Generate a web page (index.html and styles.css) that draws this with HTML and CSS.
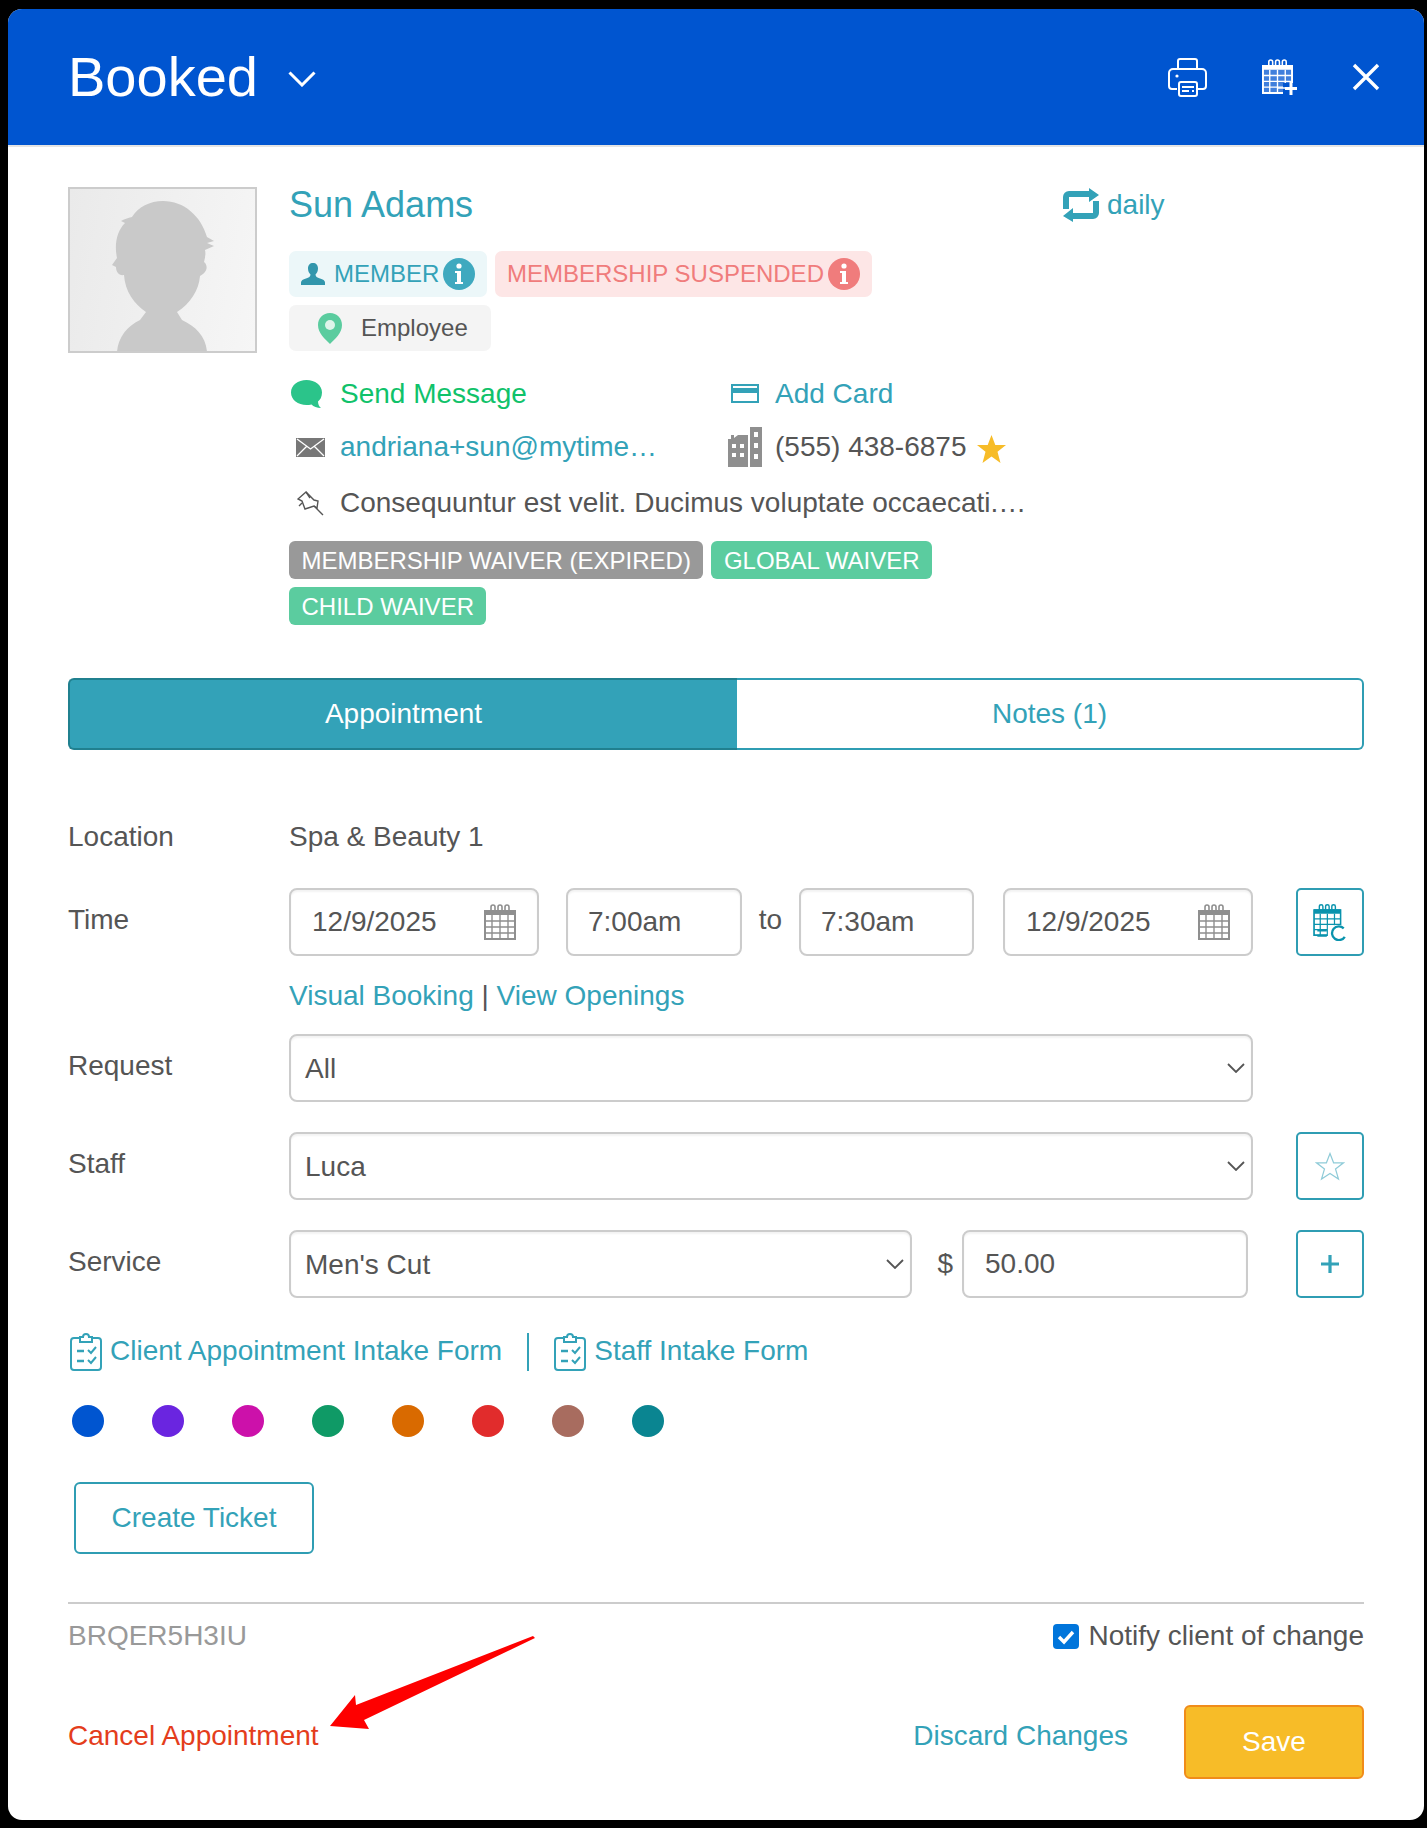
FILE: index.html
```html
<!DOCTYPE html>
<html lang="en">
<head>
  <meta charset="UTF-8">
  <title>Booked appointment</title>
  <link rel="stylesheet" href="styles.css">
</head>
<body>
  <svg class="defs" width="0" height="0">
    <symbol id="cal" viewBox="0 0 32 36">
      <path d="M1 7H31V35H1Z" fill="#fff" fill-opacity=".25" stroke="currentColor" stroke-width="2"/>
      <path d="M1 6H31V11H1Z" fill="currentColor"/>
      <path d="M7 8V3a2 2 0 0 1 4 0V8M14 8V3a2 2 0 0 1 4 0V8M21 8V3a2 2 0 0 1 4 0V8" fill="none" stroke="currentColor" stroke-width="1.6"/>
      <path d="M1 17H31M1 23H31M1 29H31M8 11V35M16 11V35M24 11V35" fill="none" stroke="currentColor" stroke-width="1.4"/>
    </symbol>
    <symbol id="clip" viewBox="0 0 32 39">
      <path d="M10 6H4a3 3 0 0 0-3 3V35a3 3 0 0 0 3 3H28a3 3 0 0 0 3-3V9a3 3 0 0 0-3-3H22M10 10H22V5H19a3 3 0 0 0-6 0H10Z" fill="none" stroke="currentColor" stroke-width="2"/>
      <path d="M7 19H14M7 29H14" stroke="currentColor" stroke-width="2.4"/>
      <path d="M18 18l3 3 5-6M18 28l3 3 5-6" fill="none" stroke="currentColor" stroke-width="2"/>
    </symbol>
    <symbol id="info" viewBox="0 0 32 32">
      <circle cx="16" cy="16" r="16" fill="currentColor"/>
      <circle cx="16" cy="8" r="2.6" fill="#fff"/>
      <path d="M12 13H18V24H20V26H12V24H14V15H12Z" fill="#fff"/>
    </symbol>
  </svg>

  <div class="modal">
    <header class="modal-head">
      <h1 class="status">Booked</h1>
      <svg class="status-caret" viewBox="0 0 28 16"><path d="M1.5 1.5L14 14L26.5 1.5" fill="none" stroke="#fff" stroke-width="3"/></svg>
      <div class="head-icons">
        <svg class="ic-print" viewBox="0 0 39 39" fill="none" stroke="#fff" stroke-width="2">
          <path d="M10 12V3a2 2 0 0 1 2-2H27a2 2 0 0 1 2 2V12"/>
          <path d="M9 31H4a3 3 0 0 1-3-3V15a4 4 0 0 1 4-4H34a4 4 0 0 1 4 4V28a3 3 0 0 1-3 3H30"/>
          <rect x="11" y="24" width="18" height="14" rx="2" fill="#0055d0"/>
          <path d="M14 29H26M14 33H21M24 33H26"/>
          <circle cx="9" cy="18" r="1.6" fill="#fff" stroke="none"/>
        </svg>
        <svg class="ic-calplus" viewBox="0 0 36 37">
          <use href="#cal" width="31" height="35" color="#fff"/>
          <path d="M21 24H36V37H21Z" fill="#0055d0"/>
          <path d="M29 23V36M23 29.500H35" stroke="#fff" stroke-width="3"/>
          <path d="M16 29H23" stroke="#fff" stroke-width="1.600"/>
        </svg>
        <svg class="ic-close" viewBox="0 0 28 28"><path d="M2 2L26 26M26 2L2 26" stroke="#fff" stroke-width="3.400"/></svg>
      </div>
    </header>

    <div class="modal-body">
      <section class="client">
        <div class="photo">
          <svg viewBox="70 189 185 162">
            <path fill="#c9c9c9" d="M117 352C118 338 127 326 140 320L146 312C134 304 125 291 124 275C119 276 116 272 116 267L112 265L117 258C114 244 117 231 125 223L121 221C124 219 128 218 132 217C138 207 150 201 163 201C184 201 201 216 207 237L214 241L207 243L214 246L205 250C206 254 205 258 204 262C208 265 208 272 200 276C199 290 190 304 177 312L182 320C195 326 206 336 207 352Z"/>
          </svg>
        </div>
        <div class="client-info">
          <div class="name-row">
            <a class="client-name">Sun Adams</a>
            <span class="repeat">
              <svg viewBox="0 0 36 34"><path d="M3 21V9a3 3 0 0 1 3-3H27M33 13V25a3 3 0 0 1-3 3H9" fill="none" stroke="currentColor" stroke-width="6"/><path d="M26 0L36 7L26 14ZM10 20L0 28L10 34Z" fill="currentColor"/></svg>
              daily
            </span>
          </div>
          <div class="badges">
            <span class="badge badge-member">
              <svg class="ic-person" viewBox="0 0 24 22"><path d="M12 0c3 0 5 2 5 5.500 0 2.500-1 4.500-2.500 6 0 2 1.500 3 4.500 4 3 .8 5 2 5 4V22H0v-2.500c0-2 2-3.200 5-4 3-1 4.500-2 4.500-4C8 10 7 8 7 5.500 7 2 9 0 12 0Z" fill="#3296ac"/></svg>
              MEMBER
              <svg class="ic-info"><use href="#info"/></svg>
            </span>
            <span class="badge badge-suspended">
              MEMBERSHIP SUSPENDED
              <svg class="ic-info"><use href="#info"/></svg>
            </span>
            <span class="badge badge-role">
              <svg class="ic-pin" viewBox="0 0 24 31"><path d="M12 0C5 0 0 5 0 12c0 8 7 14 12 19 5-5 12-11 12-19C24 5 19 0 12 0Z" fill="#5bcc9f"/><circle cx="12" cy="12" r="5" fill="#dff4ea"/></svg>
              Employee
            </span>
          </div>
          <div class="contact">
            <div class="contact-row">
              <div class="contact-cell">
                <span class="contact-ic"><svg class="ic-chat" viewBox="0 0 31 28"><path d="M15.500 0C24 0 31 5 31 12.500 31 17 29 20 27 21.500 27 24 28 26.500 30 28 26 28 22.500 26.500 20.500 24.500 18.800 24.900 17.200 25 15.500 25 7 25 0 20 0 12.500 0 5 7 0 15.500 0Z" fill="#2bc48a"/></svg></span>
                <a class="send-link">Send Message</a>
              </div>
              <div class="contact-cell">
                <span class="contact-ic"><svg class="ic-card" viewBox="0 0 28 19"><rect x="1" y="1" width="26" height="17" fill="none" stroke="#33a2b8" stroke-width="2"/><path d="M1 4H27V9H1Z" fill="#33a2b8"/></svg></span>
                <a class="link">Add Card</a>
              </div>
            </div>
            <div class="contact-row">
              <div class="contact-cell">
                <span class="contact-ic"><svg class="ic-mail" viewBox="0 0 29 19"><path d="M0 0H29V19H0Z" fill="#777"/><path d="M1 1L14.500 11L28 1M1 18L10.500 8.500M28 18L18.500 8.500" fill="none" stroke="#fff" stroke-width="1.300"/></svg></span>
                <a class="link">andriana+sun@mytime…</a>
              </div>
              <div class="contact-cell">
                <span class="contact-ic"><svg class="ic-building" viewBox="0 0 34 40"><path d="M0 12H3V8H6V11L10 8H20V40H0ZM22 0H34V40H22Z" fill="#8f8f8f"/><path d="M4 17h4v4H4ZM12 17h4v4H12ZM4 26h4v4H4ZM12 26h4v4H12ZM26 5h4v5H26ZM26 16h4v5H26ZM26 27h4v5H26Z" fill="#fff"/></svg></span>
                <span class="phone">(555) 438-6875</span>
                <svg class="ic-star" viewBox="0 0 29 28"><path d="M14.500 0L18.300 10H29L20.500 16.800 23.500 28 14.500 21.500 5.500 28 8.500 16.800 0 10H10.700Z" fill="#f7bc28"/></svg>
              </div>
            </div>
            <div class="contact-row">
              <div class="contact-cell contact-wide">
                <span class="contact-ic"><svg class="ic-note" viewBox="0 0 27 25" fill="none" stroke="#555" stroke-width="1.400"><path d="M9 1L1 8L5 10L8 18L17 15L20 17L21 10L17 9Z"/><path d="M17 15L26 24M5 12L2 15M9 1L13 7"/></svg></span>
                <span>Consequuntur est velit. Ducimus voluptate occaecati.…</span>
              </div>
            </div>
          </div>
          <div class="waivers">
            <span class="waiver waiver-expired">MEMBERSHIP WAIVER (EXPIRED)</span>
            <span class="waiver">GLOBAL WAIVER</span>
            <span class="waiver">CHILD WAIVER</span>
          </div>
        </div>
      </section>

      <nav class="tabs">
        <a class="tab tab-active">Appointment</a>
        <a class="tab">Notes (1)</a>
      </nav>

      <div class="form-row row-location">
        <span class="form-label">Location</span>
        <span class="plain-value">Spa &amp; Beauty 1</span>
      </div>

      <div class="form-row row-time">
        <span class="form-label">Time</span>
        <div class="fields">
          <div class="field field-date">12/9/2025 <svg class="ic-cal"><use href="#cal"/></svg></div>
          <div class="field field-time">7:00am</div>
          <span class="to">to</span>
          <div class="field field-time">7:30am</div>
          <div class="field field-date date-end">12/9/2025 <svg class="ic-cal"><use href="#cal"/></svg></div>
          <a class="icon-btn">
            <svg class="ic-calre" viewBox="0 0 32 36">
              <use href="#cal" width="27" height="32" color="#0a93ad"/>
              <path d="M14 21H32V36H14Z" fill="#fff"/>
              <path d="M29 24a6.500 6.500 0 1 0 1 8" fill="none" stroke="#0a93ad" stroke-width="2.200"/>
              <path d="M4 26H13M4 31H13" stroke="#0a93ad" stroke-width="1.800"/>
            </svg>
          </a>
        </div>
      </div>

      <div class="booking-links"><a class="link">Visual Booking</a> | <a class="link">View Openings</a></div>

      <div class="form-row row-request">
        <span class="form-label">Request</span>
        <div class="fields">
          <div class="field field-select select-wide"><span class="select-text">All</span> <svg class="caret" viewBox="0 0 18 10"><path d="M1 1L9 9L17 1" fill="none" stroke="#555" stroke-width="1.800"/></svg></div>
        </div>
      </div>

      <div class="form-row row-staff">
        <span class="form-label">Staff</span>
        <div class="fields">
          <div class="field field-select select-wide"><span class="select-text">Luca</span> <svg class="caret" viewBox="0 0 18 10"><path d="M1 1L9 9L17 1" fill="none" stroke="#555" stroke-width="1.800"/></svg></div>
          <a class="icon-btn">
            <svg class="ic-staff-star" viewBox="0 0 30 29"><path d="M15 1.500L18.600 10.800H28.500L20.500 17 23.500 27 15 21.500 6.500 27 9.500 17 1.500 10.800H11.400Z" fill="none" stroke="#8fcbd8" stroke-width="1.200"/></svg>
          </a>
        </div>
      </div>

      <div class="form-row row-service">
        <span class="form-label">Service</span>
        <div class="fields">
          <div class="field field-select select-service"><span class="select-text">Men's Cut</span> <svg class="caret" viewBox="0 0 18 10"><path d="M1 1L9 9L17 1" fill="none" stroke="#555" stroke-width="1.800"/></svg></div>
          <span class="dollar">$</span>
          <div class="field field-price">50.00</div>
          <a class="icon-btn">
            <svg class="ic-plus" viewBox="0 0 20 20"><path d="M10 1V19M1 10H19" stroke="#33a2b8" stroke-width="3.200"/></svg>
          </a>
        </div>
      </div>

      <div class="intake">
        <a class="intake-link"><svg class="ic-clip"><use href="#clip"/></svg><span class="intake-text">Client Appointment Intake Form</span></a>
        <span class="intake-sep"></span>
        <a class="intake-link"><svg class="ic-clip"><use href="#clip"/></svg><span class="intake-text">Staff Intake Form</span></a>
      </div>

      <div class="colors">
        <span class="color-dot dot-blue"></span>
        <span class="color-dot dot-purple"></span>
        <span class="color-dot dot-magenta"></span>
        <span class="color-dot dot-green"></span>
        <span class="color-dot dot-orange"></span>
        <span class="color-dot dot-red"></span>
        <span class="color-dot dot-brown"></span>
        <span class="color-dot dot-teal"></span>
      </div>

      <a class="ticket-btn">Create Ticket</a>

      <div class="foot-info">
        <span class="ref-code">BRQER5H3IU</span>
        <label class="notify"><span class="check"><svg viewBox="0 0 26 25"><path d="M6 13L11 18L20 8" fill="none" stroke="#fff" stroke-width="3.400"/></svg></span>Notify client of change</label>
      </div>

      <div class="foot-actions">
        <a class="cancel-link">Cancel Appointment</a>
        <a class="link discard-link">Discard Changes</a>
        <a class="save-btn">Save</a>
      </div>
    </div>
  </div>

  <!-- red annotation arrow on top of the screenshot -->
  <svg class="arrow" viewBox="322 1630 220 105"><path d="M533 1636L535 1638L364 1720L369 1729L330 1726L355 1695L356 1705Z" fill="#fe0000"/></svg>
</body>
</html>
```

FILE: styles.css
```css
body {
  margin: 0;
  background: #000;
  font-family: "Liberation Sans", Arial, sans-serif;
  font-size: 28px;
  line-height: 36px;
  color: #555;
}
.defs { position: absolute; }
svg { display: block; }

.modal {
  width: 1416px;
  height: 1811px;
  margin: 9px 0 0 8px;
  background: #fff;
  border-radius: 14px;
  overflow: hidden;
}

/* header */
.modal-head {
  display: flex;
  align-items: center;
  height: 136px;
  padding: 0 44px 0 60px;
  background: #0055d0;
  border-bottom: 2px solid #e4e4e4;
}
.status {
  margin: 0;
  font-size: 56px;
  font-weight: normal;
  line-height: 64px;
  color: #fff;
}
.status-caret { width: 28px; height: 16px; margin: 4px 0 0 30px; }
.head-icons { display: flex; align-items: center; margin-left: auto; }
.ic-print { width: 39px; height: 39px; }
.ic-calplus { width: 36px; height: 37px; margin-left: 55px; }
.ic-close { width: 28px; height: 28px; margin-left: 54px; }

.modal-body { padding: 40px 60px 0; }

/* client block */
.client { display: flex; gap: 32px; }
.photo {
  flex: none;
  width: 185px;
  height: 162px;
  border: 2px solid #ccc;
  background: linear-gradient(100deg, #eaeaea, #f6f6f6);
}
.client-info { flex: 1; }
.name-row { display: flex; align-items: center; height: 36px; }
.client-name { width: 774px; font-size: 36px; color: #33a2b8; }
.repeat { display: flex; align-items: center; gap: 8px; color: #33a2b8; }
.repeat svg { width: 36px; height: 34px; }

.badges { display: flex; flex-wrap: wrap; gap: 8px; width: 640px; margin-top: 28px; }
.badge {
  display: flex;
  align-items: center;
  height: 46px;
  border-radius: 7px;
  font-size: 24px;
}
.badge-member { width: 198px; padding-left: 12px; box-sizing: border-box; background: #ecf7f9; color: #33a2b8; }
.ic-person { width: 24px; height: 22px; margin-right: 9px; }
.ic-info { width: 32px; height: 32px; margin-left: 4px; }
.badge-member .ic-info { color: #3fa9bf; }
.badge-suspended { width: 377px; padding-left: 12px; box-sizing: border-box; background: #fde6e6; color: #f07c7c; }
.badge-role { width: 202px; padding-left: 29px; box-sizing: border-box; background: #f4f4f4; color: #555; }
.ic-pin { width: 24px; height: 31px; margin-right: 19px; }

.contact { margin-top: 16px; }
.contact-row { display: flex; height: 54px; }
.contact-row:first-child { height: 53px; }
.contact-row:last-child { margin-top: 2px; }
.contact-cell { display: flex; align-items: center; width: 439px; }
.contact-wide { width: auto; }
.contact-ic { display: flex; flex: none; width: 47px; }
.contact-cell:first-child .contact-ic { width: 51px; }
.ic-chat { width: 31px; height: 28px; margin-left: 2px; }
.ic-card { width: 28px; height: 19px; margin-left: 3px; }
.ic-mail { width: 29px; height: 19px; margin-left: 7px; }
.ic-building { width: 34px; height: 40px; }
.ic-star { width: 29px; height: 28px; margin: 4px 0 0 11px; }
.ic-note { width: 27px; height: 25px; margin-left: 8px; }
.send-link { color: #10c26a; }
.link { color: #33a2b8; }
.phone { color: #555; }

.waivers { display: flex; flex-wrap: wrap; gap: 8px; width: 700px; margin-top: 11px; }
.waiver {
  height: 38px;
  padding: 0 12.500px;
  border-radius: 6px;
  background: #5bcc9f;
  color: #fff;
  font-size: 24px;
  line-height: 39px;
}
.waiver-expired { background: #999; }

/* tabs */
.tabs { display: flex; height: 72px; margin-top: 53px; }
.tab {
  flex: 1;
  box-sizing: border-box;
  border: 2px solid #2f9db3;
  border-left: 0;
  border-radius: 0 6px 6px 0;
  text-align: center;
  line-height: 68px;
  color: #33a2b8;
}
.tab-active {
  flex: none;
  width: 669px;
  border: 2px solid #20808f;
  border-right: 0;
  border-radius: 6px 0 0 6px;
  background: #33a2b8;
  color: #fff;
}

/* form */
.form-row { display: grid; grid-template-columns: 221px 1fr; }
.form-label { padding-top: 14px; }
.row-location { margin-top: 69px; height: 36px; }
.row-location .form-label { padding-top: 0; }
.row-time { margin-top: 33px; }
.row-request { margin-top: 20px; }
.row-staff, .row-service { margin-top: 30px; }
.fields { display: flex; align-items: center; height: 68px; }
.field {
  display: flex;
  align-items: center;
  justify-content: space-between;
  box-sizing: border-box;
  height: 68px;
  padding: 0 21px;
  border: 2px solid #ccc;
  border-radius: 8px;
  box-shadow: inset 0 2px 2px #0000000d;
}
.field-date { width: 250px; }
.field-time { width: 176px; margin-left: 27px; padding-left: 20px; }
.to { width: 57px; padding-bottom: 4px; text-align: center; }
.to + .field-time { width: 175px; margin-left: 0; }
.date-end { margin-left: 29px; }
.ic-cal { width: 32px; height: 36px; color: #8f8f8f; }
.icon-btn {
  display: flex;
  align-items: center;
  justify-content: center;
  box-sizing: border-box;
  width: 68px;
  height: 68px;
  margin-left: auto;
  border: 2px solid #2f9db3;
  border-radius: 5px;
}
.ic-calre { width: 34px; height: 38px; }
.ic-staff-star { width: 30px; height: 29px; }
.ic-plus { width: 20px; height: 20px; }
.booking-links { margin: 22px 0 20px 221px; height: 36px; }
.field-select { padding: 0 6px 0 14px; }
.select-text { padding-top: 2px; }
.select-wide { width: 964px; }
.select-service { width: 623px; }
.caret { width: 18px; height: 10px; }
.dollar { box-sizing: border-box; width: 50px; padding-right: 9px; text-align: right; }
.field-price { width: 286px; }

.intake { display: flex; align-items: center; height: 39px; margin: 34px 0 0 2px; }
.intake-link { display: flex; align-items: center; gap: 8px; color: #33a2b8; }
.intake-text { padding-bottom: 2px; }
.ic-clip { width: 32px; height: 39px; }
.intake-sep { width: 2px; height: 38px; margin: 0 25px 0 25px; background: #33a2b8; }

.colors { display: flex; gap: 48px; margin: 34px 0 0 4px; }
.color-dot { width: 32px; height: 32px; border-radius: 50%; }
.dot-blue { background: #0055d0; }
.dot-purple { background: #6a25e0; }
.dot-magenta { background: #cc11aa; }
.dot-green { background: #0f9a66; }
.dot-orange { background: #d96a00; }
.dot-red { background: #e12c2c; }
.dot-brown { background: #a86c5f; }
.dot-teal { background: #0a8591; }

.ticket-btn {
  display: block;
  box-sizing: border-box;
  width: 240px;
  height: 72px;
  margin: 45px 0 0 6px;
  border: 2px solid #2f9db3;
  border-radius: 6px;
  text-align: center;
  line-height: 68px;
  color: #33a2b8;
}

.foot-info {
  display: flex;
  justify-content: space-between;
  margin-top: 48px;
  padding-top: 14px;
  border-top: 2px solid #ccc;
}
.ref-code { color: #999; }
.notify { display: flex; align-items: center; gap: 10px; }
.check { width: 26px; height: 25px; border-radius: 4px; background: #0075db; }

.foot-actions { display: flex; align-items: flex-start; margin-top: 51px; }
.cancel-link { margin-top: 13px; color: #e43d1c; }
.discard-link { margin: 13px 56px 0 auto; }
.save-btn {
  box-sizing: border-box;
  width: 180px;
  height: 74px;
  border: 2px solid #f08c1a;
  border-radius: 6px;
  background: #f7bc28;
  color: #fff;
  text-align: center;
  line-height: 70px;
}

.arrow { position: absolute; left: 322px; top: 1630px; width: 220px; height: 105px; }
```
